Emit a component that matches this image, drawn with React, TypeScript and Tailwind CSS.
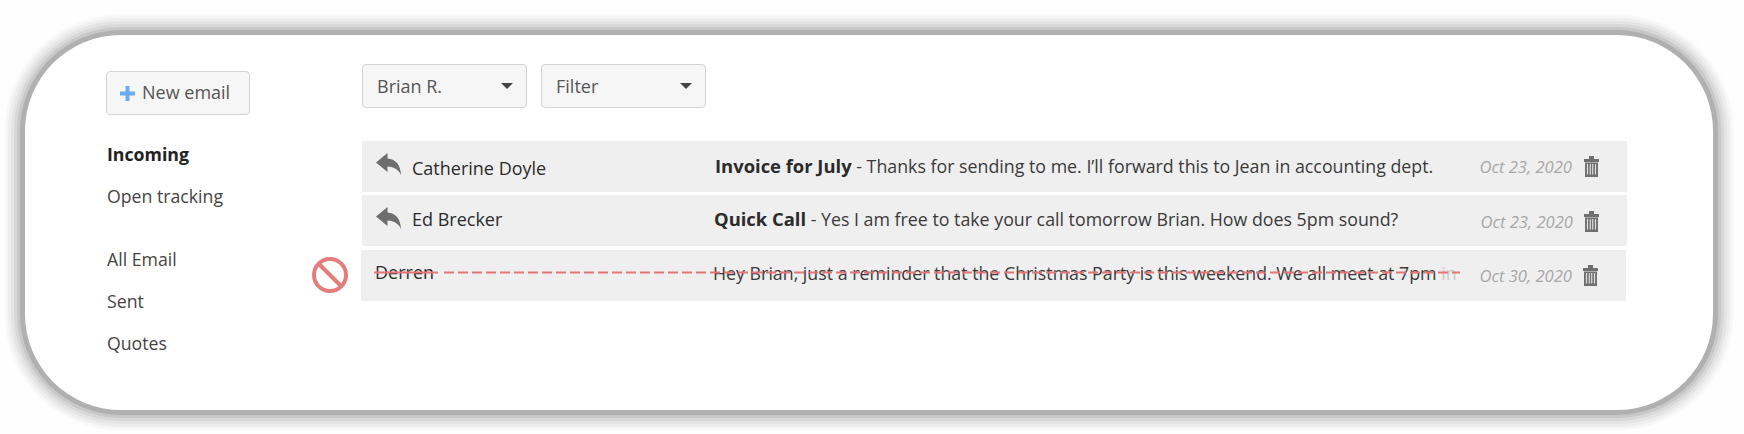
import React from "react";

function Reply() {
  return (
    <svg width="25" height="22" viewBox="0 0 25 22" className="mr-[11px] shrink-0 -translate-y-[3px]">
      <path d="M0 9.500L11.500 0V5.500C19.500 6 24.500 11.500 25 22C22.500 16.500 18.500 14 11.500 13.500V19Z" fill="#6e6e6e" />
    </svg>
  );
}

function Trash() {
  return (
    <svg width="15" height="21" viewBox="0 0 15 21" className="shrink-0">
      <path d="M5 0h5v3h5v3H0V3h5z" fill="#6f6f6f" />
      <path d="M1 6.500h13V21H1z" fill="#6f6f6f" />
      <path d="M3.500 8v10.500M6.300 8v10.500M8.700 8v10.500M11.500 8v10.500" stroke="#dcdcdc" strokeWidth="1.200" />
    </svg>
  );
}

function Caret() {
  return (
    <svg width="12" height="6" viewBox="0 0 12 6" className="shrink-0">
      <path d="M0 0h12L6 6z" fill="#444" />
    </svg>
  );
}

function Select({ label }: { label: string }) {
  return (
    <div className="flex h-[44px] w-[165px] items-center justify-between rounded-[4px] border border-[#d4d4d4] bg-[#f6f6f6] pl-[14px] pr-[13px] text-[18px] text-[#555]">
      <span>{label}</span>
      <Caret />
    </div>
  );
}

function Row({ icon, name, subject, body, date, shift = "", nameY, subjectPos, dateY, dateGap, struck = false }: { icon: boolean; name: string; subject?: string; body: string; date: string; shift?: string; nameY: string; subjectPos: string; dateY: string; dateGap: string; struck?: boolean }) {
  return (
    <div className={`relative flex h-[51px] w-[1265px] items-center bg-[#efefef] ${shift}`}>
      <div className="flex w-[354px] shrink-0 items-center pl-[14px]">
        {icon && <Reply />}
        <span className={`text-[18px] text-[#2b2b2b] ${nameY}`}>{name}</span>
      </div>
      <div className={`w-[755px] shrink-0 whitespace-nowrap text-[17.8px] text-[#3a3a3a] ${subjectPos}`}>
        {subject && <b className="text-[18.4px] font-bold text-[#2b2b2b]">{subject}</b>}
        {subject && " - "}
        {body}
        {struck && <span className="text-[#c9c9c9]"> in</span>}
      </div>
      <div className={`ml-auto mr-[28px] flex items-center ${dateGap} ${dateY}`}>
        <span className="translate-y-px text-[16.6px] italic text-[#a8a8a8]">{date}</span>
        <Trash />
      </div>
      {struck && (
        <>
          <svg width="1086" height="3" className="absolute left-[13px] top-[21px]">
            <line x1="0" y1="1.500" x2="64" y2="1.500" stroke="#e67575" strokeWidth="2" />
            <line x1="70" y1="1.500" x2="1086" y2="1.500" stroke="#e67575" strokeWidth="2" strokeDasharray="10 4" />
          </svg>
          <svg width="38" height="38" viewBox="0 0 38 38" className="absolute -left-[50px] top-[6px]">
            <circle cx="19" cy="19" r="16" fill="none" stroke="#e57c7c" strokeWidth="4" />
            <line x1="8" y1="8" x2="30" y2="30" stroke="#e57c7c" strokeWidth="4" />
          </svg>
        </>
      )}
    </div>
  );
}

export default function App() {
  return (
    <div className="h-[434px] w-[1744px] bg-[#fefefe] pl-[25px] pt-[35px] font-['Open_Sans',sans-serif]">
      <div className="flex h-[375px] w-[1688px] rounded-[96px] bg-white shadow-[0_0_0_5px_#b0b0b0,0_0_0_8px_#c8c8c8,0_0_0_11px_#d8d8d8,0_0_0_14px_#e4e4e4,0_0_0_17px_#eeeeee,0_0_2px_20px_#f6f6f6]">
        <div className="w-[337px] shrink-0 pl-[81px] pt-[36px]">
          <div className="flex h-[44px] w-[144px] items-center rounded-[4px] border border-[#d4d4d4] bg-[#f6f6f6] pl-[13px] text-[18px] text-[#555]">
            <svg width="15" height="15" viewBox="0 0 15 15" className="mr-[7px] shrink-0">
              <path d="M5.500 0h4v5.500H15v4H9.500V15h-4V9.500H0v-4h5.500z" fill="#6aaaf7" />
            </svg>
            <span className="-translate-y-px">New email</span>
          </div>
          <div className="mt-[28px] pl-px text-[17.700px] font-bold leading-[22px] text-[#222]">Incoming</div>
          <div className="mt-[20px] pl-px text-[17.700px] leading-[22px] text-[#444]">Open tracking</div>
          <div className="mt-[41px] pl-px text-[17.700px] leading-[22px] text-[#444]">All Email</div>
          <div className="mt-[20px] pl-px text-[17.700px] leading-[22px] text-[#444]">Sent</div>
          <div className="mt-[20px] pl-px text-[17.700px] leading-[22px] text-[#444]">Quotes</div>
        </div>
        <div className="pt-[29px]">
          <div className="flex gap-[14px]">
            <Select label="Brian R." />
            <Select label="Filter" />
          </div>
          <div className="mt-[33px] flex flex-col gap-[3px]">
            <Row icon name="Catherine Doyle" subject="Invoice for July" body="Thanks for sending to me. I’ll forward this to Jean in accounting dept." date="Oct 23, 2020" nameY="translate-y-[2px]" subjectPos="-ml-px -translate-y-px" dateY="" dateGap="gap-[12px]" />
            <Row icon name="Ed Brecker" subject="Quick Call" body="Yes I am free to take your call tomorrow Brian. How does 5pm sound?" date="Oct 23, 2020" nameY="-translate-y-px" subjectPos="-ml-[2px] -translate-y-[2px]" dateY="translate-y-px" dateGap="gap-[11px]" />
            <Row icon={false} name="Derren" body="Hey Brian, just a reminder that the Christmas Party is this weekend. We all meet at 7pm" date="Oct 30, 2020" shift="-translate-x-px translate-y-[1px]" nameY="-translate-y-[3px]" subjectPos="-ml-[2px] -translate-y-[2px]" dateY="" dateGap="gap-[11px]" struck />
          </div>
        </div>
      </div>
    </div>
  );
}
